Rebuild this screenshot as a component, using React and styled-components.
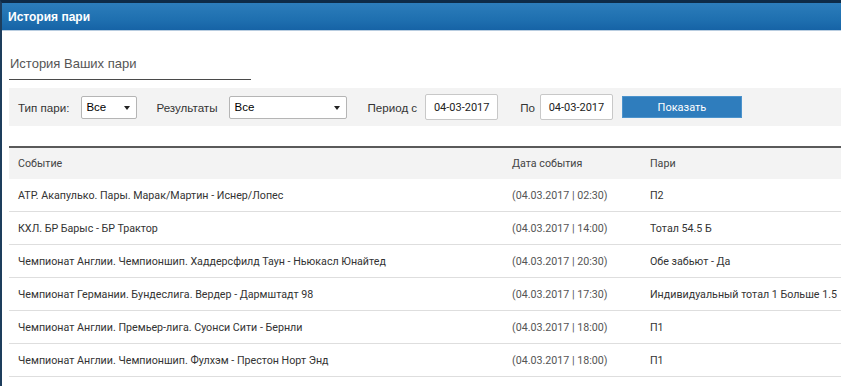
import React from "react";
import styled, { createGlobalStyle } from "styled-components";

const GlobalStyle = createGlobalStyle`
  html, body {
    margin: 0;
    padding: 0;
    background: #ffffff;
    overflow: hidden;
  }
`;

const bets = [
  { event: "АТР. Акапулько. Пары. Марак/Мартин - Иснер/Лопес", date: "(04.03.2017 | 02:30)", bet: "П2" },
  { event: "КХЛ. БР Барыс - БР Трактор", date: "(04.03.2017 | 14:00)", bet: "Тотал 54.5 Б" },
  { event: "Чемпионат Англии. Чемпионшип. Хаддерсфилд Таун - Ньюкасл Юнайтед", date: "(04.03.2017 | 20:30)", bet: "Обе забьют - Да" },
  { event: "Чемпионат Германии. Бундеслига. Вердер - Дармштадт 98", date: "(04.03.2017 | 17:30)", bet: "Индивидуальный тотал 1 Больше 1.5" },
  { event: "Чемпионат Англии. Премьер-лига. Суонси Сити - Бернли", date: "(04.03.2017 | 18:00)", bet: "П1" },
  { event: "Чемпионат Англии. Чемпионшип. Фулхэм - Престон Норт Энд", date: "(04.03.2017 | 18:00)", bet: "П1" },
];

const App = () => {
  return (
    <STFrame>
      <GlobalStyle />
      <STHeader>История пари</STHeader>
      <STBody>
        <STTitle>История Ваших пари</STTitle>

        <STFilters>
          <STLabel $right={12}>Тип пари:</STLabel>
          <STSelect $width={56}>Все</STSelect>
          <STLabel $left={19} $right={12}>Результаты</STLabel>
          <STSelect $width={118}>Все</STSelect>
          <STLabel $left={20} $right={8}>Период с</STLabel>
          <STDateInput defaultValue="04-03-2017" />
          <STLabel $left={22} $right={5}>По</STLabel>
          <STDateInput defaultValue="04-03-2017" />
          <STButton>Показать</STButton>
        </STFilters>

        <STTable>
          <STHeadRow>
            <STCell>Событие</STCell>
            <STCell>Дата события</STCell>
            <STCell>Пари</STCell>
          </STHeadRow>
          {bets.map((b, i) => (
            <STRow key={i}>
              <STCell>{b.event}</STCell>
              <STCell $muted>{b.date}</STCell>
              <STCell>{b.bet}</STCell>
            </STRow>
          ))}
        </STTable>
      </STBody>
    </STFrame>
  );
};

export default App;

const STFrame = styled.div`
  width: 841px;
  height: 386px;
  box-sizing: border-box;
  border-top: 3px solid #0e2b47;
  border-left: 2px solid #1d3d5c;
  background: #ffffff;
  overflow: hidden;
`;

const STHeader = styled.div`
  height: 28px;
  box-sizing: border-box;
  padding-left: 6px;
  display: flex;
  align-items: center;
  background: linear-gradient(to bottom, #2c7dbb 0%, #1f70b0 60%, #1663a6 100%);
  border-bottom: 1px solid #b9cde0;
  color: #ffffff;
  font: bold 12px "Liberation Sans", Arial, sans-serif;
`;

const STBody = styled.div`
  padding-left: 7px;
`;

const STTitle = styled.div`
  width: 242px;
  margin-top: 25px;
  padding-left: 1px;
  padding-bottom: 7px;
  box-sizing: border-box;
  border-bottom: 1px solid #4a4a4a;
  color: #555555;
  font: 13px/16px "Liberation Sans", Arial, sans-serif;
`;

const STFilters = styled.div`
  height: 38px;
  margin-top: 8px;
  padding-left: 9px;
  display: flex;
  align-items: center;
  background: #f3f3f3;
  font: 11.6px "Liberation Sans", Arial, sans-serif;
  color: #333333;
`;

const STLabel = styled.span`
  margin-left: ${(p) => p.$left || 0}px;
  margin-right: ${(p) => p.$right || 0}px;
`;

const STSelect = styled.div`
  position: relative;
  width: ${(p) => p.$width}px;
  height: 23px;
  box-sizing: border-box;
  padding-left: 4px;
  display: flex;
  align-items: center;
  background: #ffffff;
  border: 1px solid #b5b5b5;
  border-radius: 2px;
  color: #000000;
  font: 11.5px "Liberation Sans", Arial, sans-serif;

  &::after {
    content: "";
    position: absolute;
    right: 6px;
    top: 9px;
    border-left: 3px solid transparent;
    border-right: 3px solid transparent;
    border-top: 4px solid #222222;
  }
`;

const STDateInput = styled.input`
  width: 73px;
  height: 26px;
  box-sizing: border-box;
  border: 1px solid #c8c8c8;
  border-radius: 2px;
  background: #ffffff;
  text-align: center;
  color: #222222;
  font: 11px Roboto, "Liberation Sans", sans-serif;
  padding: 0;
  outline: none;
`;

const STButton = styled.button`
  width: 120px;
  height: 22px;
  margin-left: 9px;
  box-sizing: border-box;
  border: 1px solid #4c93cc;
  background: #2f7dbd;
  color: #ffffff;
  font: 11px Roboto, "Liberation Sans", sans-serif;
  cursor: pointer;
`;

const STTable = styled.div`
  margin-top: 20px;
  border-top: 2px solid #5a5a5a;
  font: 10.7px Roboto, "Liberation Sans", sans-serif;
  color: #333333;
`;

const STHeadRow = styled.div`
  display: grid;
  grid-template-columns: 494px 138px 1fr;
  height: 31px;
  align-items: center;
  background: #f3f3f3;
  color: #444444;
`;

const STRow = styled.div`
  display: grid;
  grid-template-columns: 494px 138px 1fr;
  height: 33px;
  box-sizing: border-box;
  align-items: center;
  border-bottom: 1px solid #dedede;
`;

const STCell = styled.div`
  padding-left: 9px;
  white-space: nowrap;
  color: ${(p) => (p.$muted ? "#555555" : "inherit")};
`;
